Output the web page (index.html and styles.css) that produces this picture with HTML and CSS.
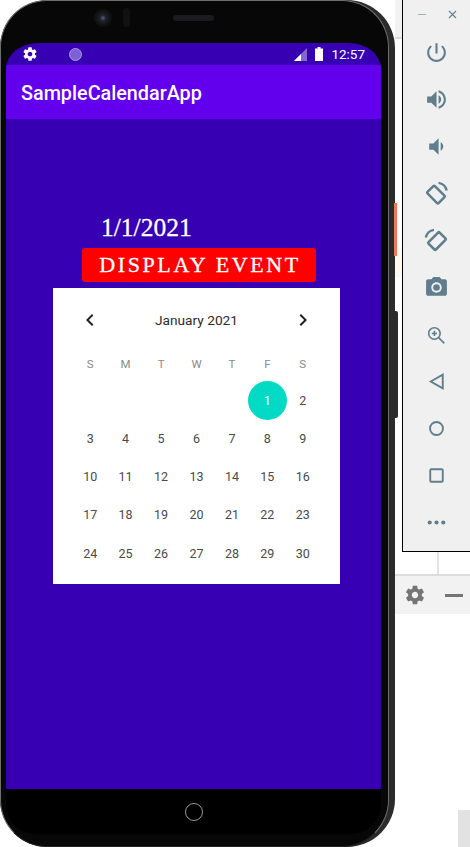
FILE: index.html
```html
<!DOCTYPE html>
<html>
<head>
<meta http-equiv="Content-Type" content="text/html; charset=utf-8"/>
<title>SampleCalendarApp</title>
<link rel="stylesheet" href="styles.css">
</head>
<body>

<div class="phone">
  <div class="bezel">
    <div class="earpiece">
      <span class="lens"></span>
      <span class="sensor"></span>
      <span class="speaker"></span>
    </div>
    <div class="screen">
      <div class="status">
        <svg class="status-gear" viewBox="0 0 24 24"><path d="M19.43 12.98c.04-.32.07-.64.07-.98s-.03-.66-.07-.98l2.11-1.65c.19-.15.24-.42.12-.64l-2-3.46c-.12-.22-.39-.3-.61-.22l-2.49 1c-.52-.4-1.08-.73-1.69-.98l-.38-2.65C14.46 2.18 14.25 2 14 2h-4c-.25 0-.46.18-.49.42l-.38 2.65c-.61.25-1.17.59-1.69.98l-2.49-1c-.23-.09-.49 0-.61.22l-2 3.46c-.13.22-.07.49.12.64l2.11 1.65c-.04.32-.07.65-.07.98s.03.66.07.98l-2.11 1.65c-.19.15-.24.42-.12.64l2 3.46c.12.22.39.3.61.22l2.49-1c.52.4 1.08.73 1.69.98l.38 2.65c.03.24.24.42.49.42h4c.25 0 .46-.18.49-.42l.38-2.65c.61-.25 1.17-.59 1.69-.98l2.49 1c.23.09.49 0 .61-.22l2-3.46c.12-.22.07-.49-.12-.64l-2.11-1.65zM12 15.5c-1.93 0-3.5-1.57-3.5-3.5s1.57-3.5 3.5-3.5 3.5 1.57 3.5 3.5-1.57 3.5-3.5 3.5z"/></svg>
        <span class="status-dot"></span>
        <svg class="status-signal" viewBox="0 0 13 13"><path class="signal-dim" d="M13 0v13H0z"/><path d="M7 6v7H0z"/></svg>
        <svg class="status-battery" viewBox="0 0 8 14"><path d="M2.5 0h3v1.5H8V14H0V1.5h2.5z"/></svg>
        <span class="status-time">12:57</span>
      </div>
      <div class="appbar">SampleCalendarApp</div>
      <div class="content">
        <div class="date-label">1/1/2021</div>
        <div class="event-btn">DISPLAY EVENT</div>
        <div class="calendar">
          <div class="cal-head">
            <svg class="cal-arrow" viewBox="0 0 24 24"><path d="M15.41 7.41L14 6l-6 6 6 6 1.41-1.41L10.83 12z"/></svg>
            <span class="cal-title">January 2021</span>
            <svg class="cal-arrow" viewBox="0 0 24 24"><path d="M10 6L8.59 7.41 13.17 12l-4.58 4.59L10 18l6-6z"/></svg>
          </div>
          <div class="cal-week">
            <span>S</span><span>M</span><span>T</span><span>W</span><span>T</span><span>F</span><span>S</span>
          </div>
          <div class="cal-days">
            <span></span><span></span><span></span><span></span><span></span>
            <span><b class="selected">1</b></span><span>2</span>
            <span>3</span><span>4</span><span>5</span><span>6</span><span>7</span><span>8</span><span>9</span>
            <span>10</span><span>11</span><span>12</span><span>13</span><span>14</span><span>15</span><span>16</span>
            <span>17</span><span>18</span><span>19</span><span>20</span><span>21</span><span>22</span><span>23</span>
            <span>24</span><span>25</span><span>26</span><span>27</span><span>28</span><span>29</span><span>30</span>
          </div>
        </div>
      </div>
    </div>
    <div class="chin"><span class="home-btn"></span></div>
  </div>
  <span class="edge-orange"></span>
  <span class="edge-button"></span>
</div>

<div class="side">
  <div class="side-top">
    <div class="gutter">
      <div class="gutter-head"></div>
      <div class="gutter-cream"></div>
    </div>
    <div class="toolbar">
      <div class="win-controls">
        <span class="win-min"></span>
        <svg class="win-close" viewBox="0 0 9 9"><path d="M1 1l7 7M8 1L1 8"/></svg>
      </div>
      <div class="tool"><svg viewBox="0 0 24 24"><path d="M13 3h-2v10h2V3zm4.83 2.17l-1.42 1.42C17.99 7.86 19 9.81 19 12c0 3.87-3.13 7-7 7s-7-3.13-7-7c0-2.19 1.01-4.14 2.58-5.42L6.17 5.17C4.23 6.82 3 9.26 3 12c0 4.97 4.03 9 9 9s9-4.03 9-9c0-2.74-1.23-5.18-3.17-6.83z"/></svg></div>
      <div class="tool"><svg viewBox="0 0 24 24"><path d="M3 9v6h4l5 5V4L7 9H3zm13.5 3c0-1.77-1.02-3.29-2.5-4.03v8.05c1.48-.73 2.5-2.25 2.5-4.02zM14 3.23v2.06c2.89.86 5 3.54 5 6.71s-2.11 5.85-5 6.71v2.06c4.01-.91 7-4.49 7-8.77s-2.99-7.86-7-8.77z"/></svg></div>
      <div class="tool"><svg viewBox="0 0 24 24"><path d="M18.5 12c0-1.77-1.02-3.29-2.5-4.03v8.05c1.48-.73 2.5-2.25 2.5-4.02zM5 9v6h4l5 5V4L9 9H5z"/></svg></div>
      <div class="tool"><svg class="line heavy" viewBox="0 0 24 24"><rect x="6.5" y="5.5" width="10" height="15" rx="1" transform="rotate(-45 11.5 13)"/><path d="M14 1.8c3.800.5 7 3.600 7.800 7.400"/></svg></div>
      <div class="tool"><svg class="line heavy" viewBox="0 0 24 24"><rect x="7.5" y="5" width="10" height="15" rx="1" transform="rotate(45 12.5 12.500)"/><path d="M9.500 1.800C5.700 2.300 2.500 5.400 1.700 9.200"/></svg></div>
      <div class="tool"><svg viewBox="0 0 24 24"><circle cx="12" cy="12" r="3.2"/><path d="M9 2L7.170 4H4c-1.100 0-2 .9-2 2v12c0 1.100.9 2 2 2h16c1.100 0 2-.9 2-2V6c0-1.100-.9-2-2-2h-3.170L15 2H9zm3 15c-2.760 0-5-2.240-5-5s2.240-5 5-5 5 2.240 5 5-2.240 5-5 5z"/></svg></div>
      <div class="tool"><svg class="line thin" viewBox="0 0 24 24"><circle cx="10" cy="11" r="5.500"/><path d="M14 15l5.500 5.500M10 8.500v5M7.500 11h5"/></svg></div>
      <div class="tool"><svg class="line" viewBox="0 0 24 24"><path d="M6.500 12L18 5.500v13z"/></svg></div>
      <div class="tool"><svg class="line" viewBox="0 0 24 24"><circle cx="12" cy="12" r="6.200"/></svg></div>
      <div class="tool"><svg class="line" viewBox="0 0 24 24"><rect x="6" y="6" width="12" height="12" rx="1"/></svg></div>
      <div class="tool"><svg viewBox="0 0 24 24"><circle cx="5.500" cy="12" r="2"/><circle cx="12" cy="12" r="2"/><circle cx="18.500" cy="12" r="2"/></svg></div>
    </div>
  </div>
  <div class="side-link"></div>
  <div class="side-bar">
    <svg class="bar-gear" viewBox="0 0 24 24"><path d="M19.43 12.98c.04-.32.07-.64.07-.98s-.03-.66-.07-.98l2.11-1.65c.19-.15.24-.42.12-.64l-2-3.46c-.12-.22-.39-.3-.61-.22l-2.49 1c-.52-.4-1.08-.73-1.69-.98l-.38-2.65C14.46 2.18 14.25 2 14 2h-4c-.25 0-.46.18-.49.42l-.38 2.65c-.61.25-1.17.59-1.69.98l-2.49-1c-.23-.09-.49 0-.61.22l-2 3.46c-.13.22-.07.49.12.64l2.11 1.65c-.04.32-.07.65-.07.98s.03.66.07.98l-2.11 1.65c-.19.15-.24.42-.12.64l2 3.46c.12.22.39.3.61.22l2.49-1c.52.4 1.08.73 1.69.98l.38 2.65c.03.24.24.42.49.42h4c.25 0 .46-.18.49-.42l.38-2.65c.61-.25 1.17-.59 1.69-.98l2.49 1c.23.09.49 0 .61-.22l2-3.46c.12-.22.07-.49-.12-.64l-2.11-1.65zM12 15.5c-1.93 0-3.5-1.57-3.5-3.5s1.570-3.500 3.500-3.500 3.500 1.570 3.500 3.500-1.570 3.500-3.500 3.500z"/></svg>
    <span class="bar-minus"></span>
  </div>
  <div class="side-corner"></div>
</div>

</body>
</html>
```
FILE: styles.css
```css
html, body {
  margin: 0;
  height: 847px;
  overflow: hidden;
  background: white;
}

body {
  display: flex;
  font-family: Roboto, sans-serif;
}

/* phone body */
.phone {
  position: relative;
  box-sizing: border-box;
  flex: none;
  width: 395px;
  height: 847px;
  padding: 0 6px 0 0;
  background: #2b2b2b;
  border-radius: 48px;
}

.bezel {
  box-sizing: border-box;
  display: flex;
  flex-direction: column;
  height: 847px;
  padding: 0 7px 0 5px;
  background: #070707;
  border: 1px solid #6f6f6f;
  border-bottom-color: #222;
  border-radius: 47px;
}

.earpiece {
  display: flex;
  align-items: center;
  height: 42px;
  padding: 0 0 9px 88px;
  box-sizing: border-box;
}

.lens {
  width: 18px;
  height: 18px;
  border-radius: 50%;
  background: radial-gradient(circle, #5a6478 0, #20232b 22%, #121214 55%, #0c0c0c 100%);
}

.sensor {
  width: 7px;
  height: 19px;
  margin-left: 11px;
  border-radius: 4px;
  background: #111;
}

.speaker {
  width: 41px;
  height: 6px;
  margin-left: 43px;
  border-radius: 3px;
  background: #1b1b1d;
}

.screen {
  display: flex;
  flex-direction: column;
  height: 746px;
  background: #3700b3;
  border-radius: 32px 32px 0 0 / 26px 26px 0 0;
  overflow: hidden;
}

.status {
  display: flex;
  align-items: center;
  flex: none;
  height: 22px;
  padding: 0 16px 0 16px;
  fill: white;
  color: white;
}

.status-gear {
  width: 16px;
  height: 16px;
}

.status-dot {
  box-sizing: border-box;
  width: 13px;
  height: 13px;
  margin-left: 31px;
  border-radius: 50%;
  background: #7d62d6;
  border: 1px solid #a998e6;
}

.status-signal {
  width: 13px;
  height: 13px;
  margin-left: auto;
}

.signal-dim {
  opacity: 0.4;
}

.status-battery {
  width: 8px;
  height: 14px;
  margin-left: 8px;
}

.status-time {
  margin-left: 8px;
  font-size: 13.5px;
}

.appbar {
  flex: none;
  height: 54px;
  padding-left: 15px;
  background: #6200ee;
  color: white;
  font-size: 19.8px;
  font-weight: 500;
  line-height: 58px;
}

.content {
  padding-top: 94px;
}

.date-label {
  height: 30px;
  margin-left: 95px;
  color: white;
  font-family: "Liberation Serif", serif;
  font-size: 25.5px;
  line-height: 30px;
  -webkit-text-stroke: 0.3px white;
}

.event-btn {
  box-sizing: border-box;
  width: 234px;
  height: 34px;
  margin: 5px 0 0 76px;
  padding-left: 2px;
  background: #ff0000;
  border-radius: 3px;
  color: white;
  font-family: "Liberation Serif", serif;
  font-size: 22px;
  letter-spacing: 2.6px;
  line-height: 34px;
  text-align: center;
  -webkit-text-stroke: 0.3px white;
}

/* calendar */
.calendar {
  box-sizing: border-box;
  width: 287px;
  height: 296px;
  margin: 6px 0 0 47px;
  padding: 0 19.5px;
  background: white;
}

.cal-head {
  display: flex;
  align-items: center;
  justify-content: space-between;
  height: 64px;
  padding: 0 5.5px;
}

.cal-arrow {
  width: 24px;
  height: 24px;
  fill: #222;
}

.cal-title {
  color: #2c2c2c;
  font-size: 13.7px;
}

.cal-week, .cal-days {
  display: grid;
  grid-template-columns: repeat(7, minmax(0, 1fr));
  text-align: center;
}

.cal-week {
  height: 24px;
  margin-bottom: 5px;
  color: #8a8a8a;
  font-size: 11.5px;
  line-height: 24px;
}

.cal-days {
  grid-auto-rows: 38.25px;
  color: #4a4a4a;
  font-size: 12.5px;
}

.cal-days span {
  display: flex;
  align-items: center;
  justify-content: center;
}

.selected {
  display: flex;
  align-items: center;
  justify-content: center;
  flex: none;
  width: 39px;
  height: 39px;
  border-radius: 50%;
  background: #03dac5;
  color: white;
  font-weight: 400;
}

.chin {
  display: flex;
  justify-content: center;
  height: 45px;
  padding-top: 14px;
  box-sizing: border-box;
  background: black;
  border-radius: 0 0 30px 30px;
}

.home-btn {
  box-sizing: border-box;
  width: 18px;
  height: 18px;
  border: 1px solid #9a9a9a;
  border-radius: 50%;
}

/* bits on the phone's right edge */
.edge-orange {
  position: absolute;
  left: 394px;
  top: 203px;
  width: 3px;
  height: 53px;
  background: #f0765a;
}

.edge-button {
  position: absolute;
  left: 394px;
  top: 311px;
  width: 4px;
  height: 107px;
  background: #2a2a2a;
  border-radius: 0 2px 2px 0;
}

/* emulator side panel */
.side {
  display: flex;
  flex-direction: column;
  flex: 1;
  min-width: 0;
  height: 847px;
}

.side-top {
  display: flex;
  height: 552px;
}

.gutter {
  flex: none;
  width: 7px;
}

.gutter-head {
  height: 37px;
  background: #f2f2f2;
  border-bottom: 2px solid #dcdcdc;
}

.gutter-cream {
  height: 29px;
  margin-top: 209px;
  background: #fffaf0;
}

.toolbar {
  flex: 1;
  background: #f0f0f0;
  border-left: 1px solid black;
  border-bottom: 1px solid black;
}

.win-controls {
  display: flex;
  align-items: center;
  height: 29px;
  padding-left: 15px;
}

.win-min {
  width: 8px;
  height: 1px;
  background: #9fb0b8;
}

.win-close {
  width: 9px;
  height: 9px;
  margin-left: 22px;
  fill: none;
  stroke: #688391;
  stroke-width: 1.2;
}

.tool {
  display: flex;
  align-items: center;
  justify-content: center;
  height: 47px;
}

.tool svg {
  width: 25px;
  height: 25px;
  fill: #5f7d8c;
}

.tool .line {
  fill: none;
  stroke: #5f7d8c;
  stroke-width: 1.8;
}

.tool .heavy {
  stroke-width: 2.4;
}

.tool .thin {
  stroke-width: 1.5;
}

.side-link {
  width: 2px;
  height: 22px;
  margin-left: 42px;
  background: #e2e2e2;
}

.side-bar {
  display: flex;
  align-items: center;
  height: 38px;
  padding-left: 9px;
  background: #f2f2f2;
  border-top: 2px solid #dcdcdc;
}

.bar-gear {
  width: 22px;
  height: 22px;
  fill: #757575;
}

.bar-minus {
  width: 18px;
  height: 3px;
  margin-left: 19px;
  background: #757575;
}

.side-corner {
  align-self: flex-end;
  width: 12px;
  height: 37px;
  margin-top: auto;
  background: #e2e2e2;
}
```
